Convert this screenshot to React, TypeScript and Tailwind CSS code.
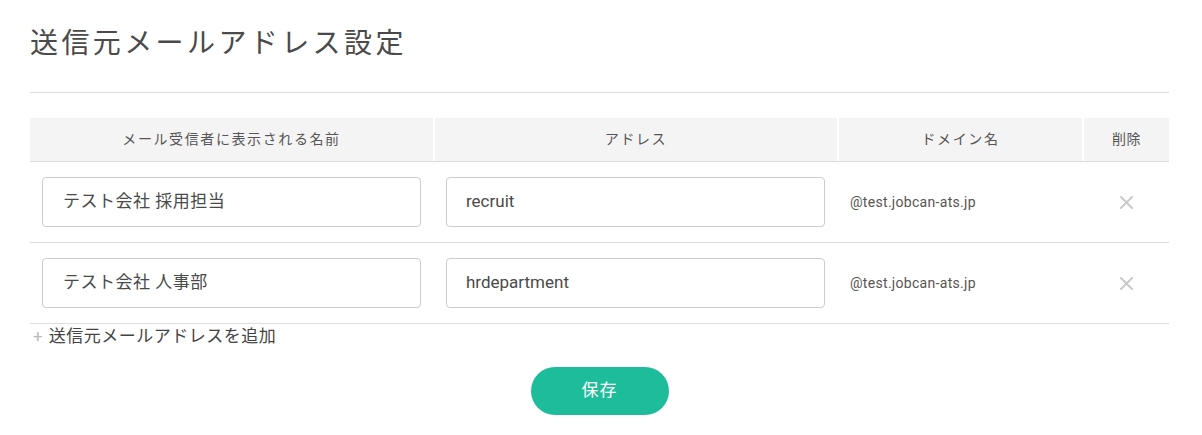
const rows = [
  { name: 'テスト会社 採用担当', address: 'recruit' },
  { name: 'テスト会社 人事部', address: 'hrdepartment' },
]

const font = { fontFamily: 'Roboto, "Noto Sans CJK JP", sans-serif' }

function CloseIcon() {
  return (
    <svg width="13" height="13" viewBox="0 0 13 13" className="block">
      <path d="M1 1 L12 12 M12 1 L1 12" stroke="#c9c9c9" strokeWidth="2" strokeLinecap="square" />
    </svg>
  )
}

export default function App() {
  return (
    <div className="bg-white min-h-[435px] text-[#444]" style={font}>
      <div className="ml-[30px] w-[1139px] pt-[23px]">
        <h1 className="text-[28px] leading-[42px] tracking-[3.4px] text-[#4a4a4a] font-normal">送信元メールアドレス設定</h1>
        <div className="mt-[27px] border-t border-[#dcdcdc]" />

        <div className="mt-[25px]">
          <div className="grid grid-cols-[403px_402px_243px_85px] gap-x-[2px] border-b border-[#dddddd]">
            <div className="bg-[#f4f4f4] h-[43px] flex items-center justify-center text-[14px] tracking-[1.6px] text-[#555]">メール受信者に表示される名前</div>
            <div className="bg-[#f4f4f4] h-[43px] flex items-center justify-center text-[14px] tracking-[1.6px] text-[#555]">アドレス</div>
            <div className="bg-[#f4f4f4] h-[43px] flex items-center justify-center text-[14px] tracking-[1.6px] text-[#555]">ドメイン名</div>
            <div className="bg-[#f4f4f4] h-[43px] flex items-center justify-center text-[14px] tracking-[0.5px] text-[#555]">削除</div>
          </div>

          {rows.map((row) => (
            <div key={row.address} className="grid grid-cols-[403px_402px_243px_85px] gap-x-[2px] border-b border-[#dddddd] h-[81px] items-center">
              <div className="px-[12px]">
                <div className="h-[50px] border border-[#cccccc] rounded-[4px] flex items-center pl-[20px] text-[17px] text-[#4a4a4a] tracking-[0.5px]">{row.name}</div>
              </div>
              <div className="pl-[11px] pr-[12px]">
                <div className="h-[50px] border border-[#cccccc] rounded-[4px] flex items-center pl-[19px] text-[17px] text-[#4a4a4a]">{row.address}</div>
              </div>
              <div className="pl-[11px] text-[14px] tracking-[0.3px] text-[#555]">@test.jobcan-ats.jp</div>
              <div className="flex justify-center">
                <CloseIcon />
              </div>
            </div>
          ))}

          <div className="flex items-center h-[24px] pl-[3px] text-[17px] leading-[24px]">
            <span className="text-[#bbbbbb] mr-[6px]">+</span>
            <span className="tracking-[0.5px] text-[#444]">送信元メールアドレスを追加</span>
          </div>

          <div className="flex justify-center mt-[19px]">
            <button className="w-[138px] h-[48px] rounded-full bg-[#1dbd9b] text-white text-[17px] tracking-[1px]">保存</button>
          </div>
        </div>
      </div>
    </div>
  )
}
